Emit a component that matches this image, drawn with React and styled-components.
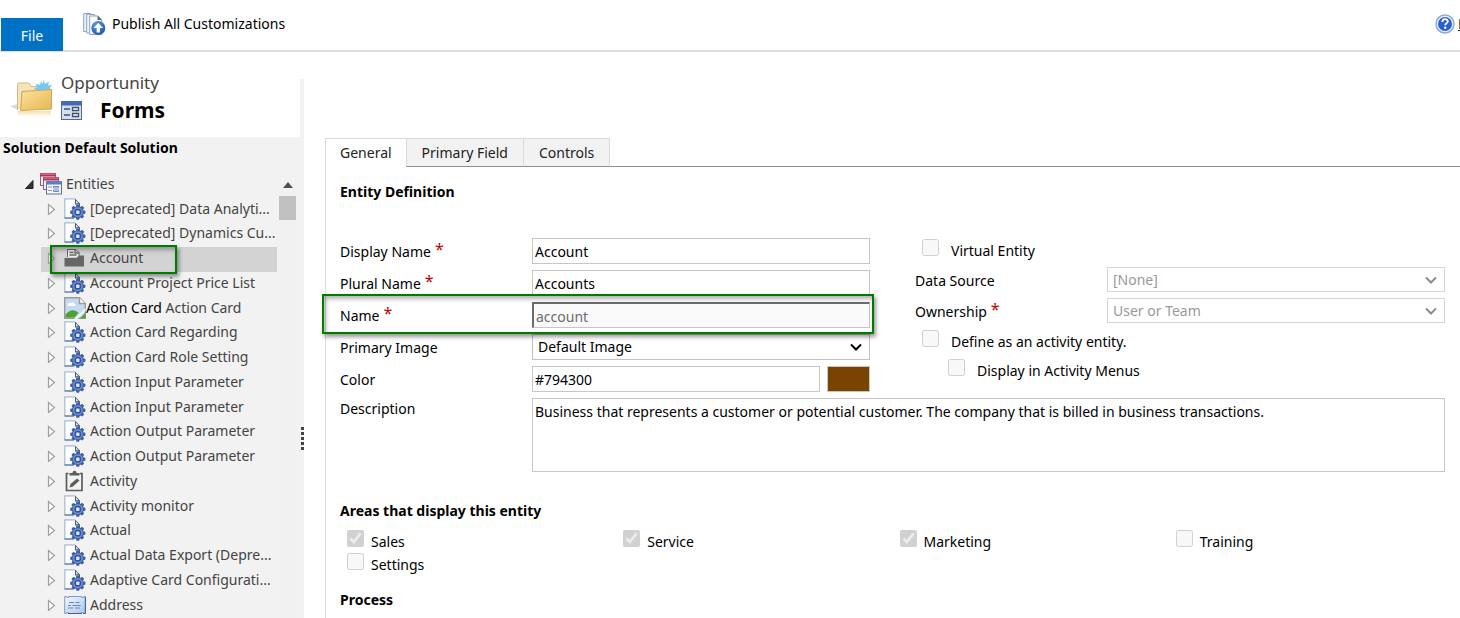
import React from 'react';
import styled, { createGlobalStyle } from 'styled-components';

const GlobalStyle = createGlobalStyle`
  * { box-sizing: border-box; }
  html, body { margin: 0; height: 100%; overflow: hidden; }
  body, button, input, select, textarea {
    font-family: "Segoe UI", "Noto Sans", "Open Sans", sans-serif;
    font-size: 14px;
    line-height: 20px;
    color: #000;
  }
  body { background: #fff; }
`;

const Shell = styled.div`
  display: flex;
  flex-direction: column;
  height: 100vh;
  overflow: hidden;
`;

const Ribbon = styled.header`
  display: flex;
  flex: none;
  height: 52px;
  padding-left: 1px;
  border-bottom: 2px solid #dedede;
`;

const FileButton = styled.button`
  align-self: flex-end;
  width: 62px;
  height: 33px;
  margin-bottom: -1px;
  padding: 2px 0 0;
  border: 0;
  background: #0072c6;
  color: #fff;
`;

const PublishButton = styled.button`
  display: flex;
  align-items: center;
  gap: 6px;
  height: 24px;
  margin: 12px 0 0 20px;
  padding: 0;
  border: 0;
  background: none;
  white-space: nowrap;
`;

const HelpArea = styled.div`
  display: flex;
  align-items: center;
  gap: 3px;
  width: 25px;
  height: 22px;
  margin: 13px 0 0 auto;
  overflow: hidden;
  white-space: nowrap;
  svg { flex: none; }
`;

const HelpLink = styled.a`
  color: #222;
`;

const Workspace = styled.div`
  display: flex;
  flex: 1;
  min-height: 0;
`;

const Sidebar = styled.aside`
  display: flex;
  flex-direction: column;
  flex: none;
  width: 300px;
  background: #f2f2f2;
`;

const Splitter = styled.div`
  display: flex;
  flex: none;
  flex-direction: column;
  align-items: flex-end;
  justify-content: center;
  width: 4px;
  margin-top: 27px;
  padding-top: 180px;
  background: #f2f2f2;
`;

const TitleBlock = styled.div`
  display: flex;
  align-items: flex-start;
  flex: none;
  height: 85px;
  padding: 20px 0 0 10px;
  background: #fff;
`;

const FolderSlot = styled.div`
  padding-top: 8px;
  margin-right: 8px;
`;

const EntityTitle = styled.div`
  font-size: 17px;
  line-height: 22px;
  color: #444;
`;

const FormsHeading = styled.h1`
  display: flex;
  align-items: center;
  gap: 18px;
  margin: 2px 0 0;
  font-size: 21px;
  line-height: 28px;
  font-weight: 700;
  svg { margin-top: 2px; }
`;

const SolutionName = styled.div`
  flex: none;
  height: 36px;
  padding: 1px 0 0 3px;
  font-weight: 700;
`;

const TreeArea = styled.div`
  display: flex;
  flex: 1;
  min-height: 0;
  overflow: hidden;
`;

const Tree = styled.ul`
  width: 277px;
  margin: 0;
  padding: 0;
  list-style: none;
`;

const TreeRow = styled.li`
  position: relative;
  display: flex;
  align-items: center;
  height: ${(p) => (p.$short ? 24 : 25)}px;
  margin-left: ${(p) => (p.$root ? 17 : 41)}px;
  padding: 0 0 3px 5px;
  background: ${(p) => (p.$selected ? '#d3d3d3' : 'transparent')};
  color: #444;
  svg { flex: none; }
`;

const RowLabel = styled.span`
  margin-left: ${(p) => p.$gap}px;
  white-space: nowrap;
  b { font-weight: 400; color: #000; }
`;

const ScrollTrack = styled.div`
  width: 17px;
  margin-left: 2px;
  background: #f1f1f1;
`;

const ScrollUp = styled.div`
  display: flex;
  align-items: center;
  justify-content: center;
  height: 23px;
`;

const ScrollThumb = styled.div`
  height: 24px;
  background: #c1c1c1;
`;

const Callout = styled.div`
  position: absolute;
  z-index: 2;
  top: ${(p) => p.$inset[0]}px;
  right: ${(p) => p.$inset[1]}px;
  bottom: ${(p) => p.$inset[2]}px;
  left: ${(p) => p.$inset[3]}px;
  border: 2px solid #007d00;
  box-shadow: 2px 3px 4px rgba(0, 0, 0, 0.4), inset 2px 3px 4px rgba(0, 0, 0, 0.3);
  pointer-events: none;
`;

const Main = styled.main`
  display: flex;
  flex: 1;
  flex-direction: column;
  min-width: 0;
  padding: 86px 0 0 21px;
`;

const TabBar = styled.div`
  display: flex;
  flex: none;
  height: 29px;
`;

const TabFill = styled.div`
  flex: 1;
  border-bottom: 1px solid #8a8d98;
`;

const Tab = styled.button`
  padding: 0 ${(p) => (p.$active ? 14 : 15)}px;
  border: 1px solid #dadada;
  border-left-width: ${(p) => (p.$active || p.$second ? 1 : 0)}px;
  border-right-width: ${(p) => (p.$active ? 0 : 1)}px;
  border-bottom: ${(p) => (p.$active ? '0' : '1px solid #8a8d98')};
  background: ${(p) => (p.$active ? '#fff' : '#f2f2f2')};
  color: #222;
`;

const Panel = styled.div`
  flex: 1;
  min-height: 0;
  padding: 15px 15px 0 14px;
  border-left: 1px solid #dadada;
`;

const SectionTitle = styled.h2`
  margin: 0;
  font-size: 14px;
  line-height: 20px;
  font-weight: 700;
`;

const FormColumns = styled.div`
  display: grid;
  grid-template-columns: 1fr 1fr;
  column-gap: 45px;
  margin-top: 36px;
`;

const FieldStack = styled.div`
  display: flex;
  flex-direction: column;
  gap: ${(p) => p.$gap}px;
`;

const Field = styled.div`
  position: relative;
  display: grid;
  grid-template-columns: 192px 1fr;
  align-items: center;
  label { padding-top: 1px; }
`;

const DescriptionField = styled(Field)`
  align-items: start;
  margin: 6px 0 29px;
`;

const Required = styled.span`
  margin-left: 4px;
  color: #c00000;
  font-size: 16px;
  line-height: 0;
  vertical-align: 2px;
`;

const TextInput = styled.input`
  width: 100%;
  min-width: 0;
  height: 26px;
  padding: 1px 2px 0;
  border: 1px solid #c6c6c6;
  border-radius: 0;
  background: #fff;
  &:disabled {
    border-width: 2px 1px 1px 2px;
    border-color: #6b6b6b #c6c6c6 #c6c6c6 #6b6b6b;
    background: #fafafa;
    color: #6b6b6b;
  }
`;

const SelectFrame = styled.div`
  display: grid;
  grid-template-columns: 1fr 20px;
  align-items: center;
  height: ${(p) => (p.$disabled ? 25 : 26)}px;
  margin-bottom: ${(p) => (p.$disabled ? 1 : 0)}px;
  color: ${(p) => (p.$disabled ? '#8c8c8c' : '#000')};
  select { grid-area: 1 / 1 / 2 / 3; }
  svg { grid-area: 1 / 2 / 2 / 3; pointer-events: none; }
`;

const Select = styled.select`
  appearance: none;
  width: 100%;
  height: 100%;
  padding: 0 20px 0 5px;
  border: 1px solid #c0c0c0;
  border-radius: 0;
  background: #fff;
  &:disabled { border-color: #d6d6d6; color: #999; opacity: 1; }
`;

const ColorPair = styled.div`
  display: grid;
  grid-template-columns: 1fr 43px;
  gap: 7px;
`;

const Swatch = styled.button`
  padding: 0;
  border: 1px solid #c6c6c6;
  background: #794300;
`;

const TextArea = styled.textarea`
  display: block;
  width: 100%;
  height: 74px;
  padding: 3px 2px;
  border: 1px solid #c6c6c6;
  border-radius: 0;
  resize: none;
`;

const Tick = styled.label`
  display: flex;
  align-items: flex-start;
  height: 24px;
  padding: 1px 0 0 ${(p) => (p.$nested ? 33 : 7)}px;
  input {
    flex: none;
    width: 17px;
    height: 17px;
    margin: 0 12px 0 0;
  }
  span { margin-top: 2px; }
`;

const AreaTick = styled(Tick)`
  height: 23px;
  padding-top: 0;
  input { margin-right: 7px; }
`;

const AreaGrid = styled.div`
  display: grid;
  grid-template-columns: repeat(4, 1fr);
  margin: 9px 0 14px;
`;

const GearPageIcon = () => (
  <svg width="22" height="22" viewBox="0 0 22 22">
    <path d="M1 .5h10.500l4.500 5v14.500H1z" fill="#fcfdff" />
    <path d="M.8 20V.8H11" fill="none" stroke="#a9bad4" strokeWidth="1.200" />
    <path d="M.5 20h9" stroke="#5878a8" strokeWidth="1.400" />
    <path d="M11 .5l5 5V9h-1.300V6.500H11z" fill="#48607c" />
    <path d="M12 2.500l2.500 2.700H12z" fill="#dfe8f4" />
    <g transform="translate(13.800 14.200)">
      <g fill="#3f5f9f">
        <circle r="6" />
        {[0, 45, 90, 135].map((a) => (
          <rect key={a} x="-1.700" y="-7.600" width="3.400" height="15.200" rx="1" transform={`rotate(${a})`} />
        ))}
      </g>
      <circle r="5" fill="#6f90d4" />
      <circle r="3.400" fill="#2f509c" />
      <rect x="-1.700" y="-1.700" width="3.400" height="3.400" rx=".6" fill="#dbe5fa" />
    </g>
  </svg>
);

const EntitiesIcon = () => (
  <svg width="22" height="22" viewBox="0 0 22 22">
    {[[0.5, 0.5], [3.5, 4.5]].map(([x, y]) => (
      <g key={x}>
        <rect x={x} y={y} width="15" height="12" fill="#f8eef2" stroke="#8d6280" />
        <rect x={x - 0.5} y={y - 0.5} width="16" height="3.500" fill="#b03355" />
        <path d={`M${x} ${y + 0.6}h15`} stroke="#d98aa0" />
      </g>
    ))}
    <rect x="6.500" y="8.500" width="15" height="12.500" fill="#f2f6fc" stroke="#58739c" />
    <rect x="6" y="8" width="16" height="3.500" fill="#5d7fc0" />
    <path d="M8 14h4M8 17.500h4" stroke="#8b9bb5" />
    <path d="M13.500 13.500h5v1.500h-5zM13.500 17h5v1.500h-5z" fill="#fff" stroke="#7288ac" />
  </svg>
);

const AccountIcon = () => (
  <svg width="22" height="22" viewBox="0 0 22 22">
    <path d="M3.500 10V2.500h8l3.500 3V10" fill="#e8e8e8" stroke="#6a6a6a" />
    <path d="M11 2v4h4.500M5.500 5.500h4M5.500 8h7" fill="none" stroke="#6a6a6a" strokeWidth="1.300" />
    <path d="M.5 11h12l2.500-2.500h5V19.500H.5z" fill="#666" />
  </svg>
);

const BrokenImageIcon = () => (
  <svg width="22" height="22" viewBox="0 0 22 22">
    <path d="M.7.7h14.800l5.800 5.800v14.800H.7z" fill="#c6d9f3" stroke="#9a9a9a" strokeWidth="1.400" />
    <path d="M15.500.7v5.800h5.800" fill="#fff" stroke="#9a9a9a" strokeWidth="1.400" />
    <path d="M3.500 8c0-2 2-2.500 3-1.500 1-2 4-1.500 4 .5 1.500 0 1.500 2 0 2h-6c-.6 0-1-.4-1-1z" fill="#fff" />
    <path d="M1.500 20.500v-3c4-5 9-6 13-1.500l-4 4.500z" fill="#4aa32b" />
    <path d="M10 22L21.500 11v3L13.500 22z" fill="#f2f2f2" />
    <path d="M16 21.300h5.300V16z" fill="#4aa32b" />
  </svg>
);

const ActivityIcon = () => (
  <svg width="22" height="22" viewBox="0 0 22 22">
    <path d="M4.500 3.500H2.500v17h15.500v-17h-2" fill="none" stroke="#5c5c5c" strokeWidth="1.700" />
    <path d="M5.500 5.500V3h3c0-3 4-3 4 0h3v2.500z" fill="#5c5c5c" />
    <path d="M5.500 17.500l1-3.500 6.500-5.500 2.500 2-6.500 6z" fill="#5c5c5c" />
  </svg>
);

const AddressIcon = () => (
  <svg width="22" height="22" viewBox="0 0 22 22">
    <defs>
      <linearGradient id="addressCard" x1="0" y1="0" x2="1" y2="1">
        <stop offset="0" stopColor="#f4f9ff" />
        <stop offset="1" stopColor="#a9c6ea" />
      </linearGradient>
    </defs>
    <path d="M.7 2.500h2v1h2v-1h13v1h2v-1h1.800v17h-2v-1h-2v1h-13v-1h-2v1H.7z" fill="url(#addressCard)" stroke="#7f9cc8" />
    <path d="M21.300 3v16.500h-2M4 19.500h14" fill="none" stroke="#3d609d" />
    <path d="M5 8.500h5M11.500 8.500h4M4 11.500h3M8.500 11.500h8M4 14h5M11 14h5" stroke="#6a86b3" />
  </svg>
);

const PublishIcon = () => (
  <svg width="23" height="24" viewBox="0 0 23 24">
    <defs>
      <radialGradient id="publishBall" cx=".4" cy=".3" r=".8">
        <stop offset="0" stopColor="#5fa0e6" />
        <stop offset="1" stopColor="#1c4f9c" />
      </radialGradient>
    </defs>
    <path d="M.7 1.500h7V19.500h-7z" fill="#e9f0fa" stroke="#8ea6c8" />
    <path d="M3.700 2.500h8V21h-8z" fill="#eef4fc" stroke="#8ea6c8" />
    <path d="M6.700 4h8.500l3.500 4v14.500h-12z" fill="#fbfdff" stroke="#8ea6c8" />
    <path d="M14.500 3.500v4.500h4.500z" fill="#4f6884" />
    <circle cx="15.300" cy="16" r="7" fill="url(#publishBall)" />
    <path d="M15.300 11l4.800 5h-3.200v4.500h-3.200V16h-3.200z" fill="#fff" />
  </svg>
);

const HelpIcon = () => (
  <svg width="20" height="20" viewBox="0 0 20 20">
    <circle cx="10" cy="10" r="9" fill="#f0f5fc" stroke="#8fabd0" strokeWidth="1.500" />
    <circle cx="10" cy="10" r="7" fill="#2860d2" />
    <path d="M7.300 8c0-4 5.500-3.500 5.500-.7 0 2-2.600 1.900-2.600 4" fill="none" stroke="#fff" strokeWidth="1.800" />
    <circle cx="10.200" cy="13.800" r="1.200" fill="#fff" />
  </svg>
);

const FolderIcon = () => (
  <svg width="43" height="38" viewBox="0 0 43 38">
    <defs>
      <linearGradient id="folderFront" x1="0" y1="0" x2="1" y2="1">
        <stop offset="0" stopColor="#fbe2a0" />
        <stop offset="1" stopColor="#e8b551" />
      </linearGradient>
      <linearGradient id="folderFade" x1="0" y1="0" x2="0" y2="1">
        <stop offset="0" stopColor="#f2d08a" stopOpacity=".7" />
        <stop offset="1" stopColor="#f2d08a" stopOpacity="0" />
      </linearGradient>
    </defs>
    <path d="M0 26l8-2v6z" fill="#dcdcdc" />
    <path d="M8 31h33v6H8z" fill="url(#folderFade)" />
    <path d="M7.500 30V4.500c0-1 .5-1.500 1.500-1.500h9c1 0 1.500.5 2 1.500l1 2h18v10" fill="#f5e3bb" stroke="#cdb98c" />
    <path d="M33.500 0l1.500 4 4-2.500-1 4 4-.5-2.500 3L42 10H26l-2-2 3.500-.7-2-3.800 4.500 1.500L31 1l1.500 3z" fill="#74c8f8" />
    <path d="M12 11.500L41.500 9.500V29L10.500 30.500z" fill="url(#folderFront)" stroke="#d2a550" />
  </svg>
);

const FormIcon = () => (
  <svg width="21" height="20" viewBox="0 0 21 20">
    <rect x=".5" y=".5" width="20" height="18" fill="#d3dff2" stroke="#51698f" />
    <rect x="0" y="0" width="21" height="4.500" fill="#4569b4" />
    <path d="M3 8h6M3 14h6" stroke="#444f63" strokeWidth="1.300" />
    <path d="M11.500 6.500h6v3h-6zM11.500 12.500h6v3h-6z" fill="#fff" stroke="#444f63" strokeWidth="1.300" />
  </svg>
);

const ChevronIcon = () => (
  <svg width="12" height="8" viewBox="0 0 12 8">
    <path d="M1 1.500l5 5 5-5" fill="none" stroke="currentColor" strokeWidth="2" />
  </svg>
);

const Expander = ({ open }) =>
  open ? (
    <svg width="18" height="12" viewBox="0 0 18 12">
      <path d="M3.500 10.500H11V2.500z" fill="#333" stroke="#222" />
    </svg>
  ) : (
    <svg width="18" height="12" viewBox="0 0 18 12">
      <path d="M2.500 1.500v10l6-5z" fill="#fafafa" stroke="#a0a0a0" strokeWidth="1.200" />
    </svg>
  );

const icons = {
  gear: GearPageIcon,
  account: AccountIcon,
  broken: BrokenImageIcon,
  activity: ActivityIcon,
  address: AddressIcon,
};

const entities = [
  ['[Deprecated] Data Analyti...', 'gear'],
  ['[Deprecated] Dynamics Cu...', 'gear'],
  ['Account', 'account'],
  ['Account Project Price List', 'gear'],
  ['Action Card', 'broken'],
  ['Action Card Regarding', 'gear'],
  ['Action Card Role Setting', 'gear'],
  ['Action Input Parameter', 'gear'],
  ['Action Input Parameter', 'gear'],
  ['Action Output Parameter', 'gear'],
  ['Action Output Parameter', 'gear'],
  ['Activity', 'activity'],
  ['Activity monitor', 'gear'],
  ['Actual', 'gear'],
  ['Actual Data Export (Depre...', 'gear'],
  ['Adaptive Card Configurati...', 'gear'],
  ['Address', 'address'],
];

const areas = [
  ['Sales', true],
  ['Service', true],
  ['Marketing', true],
  ['Training', false],
  ['Settings', false],
];

const EntityTree = () => (
  <TreeArea>
    <Tree>
      <TreeRow $root>
        <Expander open />
        <EntitiesIcon />
        <RowLabel $gap={4}>Entities</RowLabel>
      </TreeRow>
      {entities.map(([name, icon], i) => {
        const Icon = icons[icon];
        return (
          <TreeRow key={i} $short={i % 4 === 0} $selected={icon === 'account'}>
            <Expander />
            <Icon />
            <RowLabel $gap={icon === 'broken' ? 0 : 4}>
              {icon === 'broken' && <b>Action Card </b>}
              {name}
            </RowLabel>
            {icon === 'account' && <Callout $inset={[-2, 100, -2, 9]} />}
          </TreeRow>
        );
      })}
    </Tree>
    <ScrollTrack>
      <ScrollUp>
        <svg width="10" height="6" viewBox="0 0 10 6"><path d="M0 6L5 0l5 6z" fill="#505050" /></svg>
      </ScrollUp>
      <ScrollThumb />
    </ScrollTrack>
  </TreeArea>
);

const CheckField = ({ children, ...rest }) => (
  <Tick {...rest}>
    <input type="checkbox" disabled />
    <span>{children}</span>
  </Tick>
);

const SelectField = ({ id, label, required, value, disabled }) => (
  <Field>
    <label htmlFor={id}>{label}{required && <Required>*</Required>}</label>
    <SelectFrame $disabled={disabled}>
      <Select id={id} disabled={disabled}><option>{value}</option></Select>
      <ChevronIcon />
    </SelectFrame>
  </Field>
);

export default function App() {
  return (
    <Shell>
      <GlobalStyle />
      <Ribbon>
        <FileButton>File</FileButton>
        <PublishButton><PublishIcon />Publish All Customizations</PublishButton>
        <HelpArea><HelpIcon /><HelpLink href="#help">Help</HelpLink></HelpArea>
      </Ribbon>
      <Workspace>
        <Sidebar>
          <TitleBlock>
            <FolderSlot><FolderIcon /></FolderSlot>
            <div>
              <EntityTitle>Opportunity</EntityTitle>
              <FormsHeading><FormIcon />Forms</FormsHeading>
            </div>
          </TitleBlock>
          <SolutionName>Solution Default Solution</SolutionName>
          <EntityTree />
        </Sidebar>
        <Splitter>
          <svg width="3" height="26" viewBox="0 0 3 26">
            {[0, 5, 10, 15, 20].map((y) => <rect key={y} y={y + 1} width="3" height="3" fill="#444" />)}
          </svg>
        </Splitter>
        <Main>
          <TabBar>
            <Tab $active>General</Tab>
            <Tab $second>Primary Field</Tab>
            <Tab>Controls</Tab>
            <TabFill />
          </TabBar>
          <Panel>
            <SectionTitle>Entity Definition</SectionTitle>
            <FormColumns>
              <FieldStack $gap={6}>
                <Field>
                  <label htmlFor="displayName">Display Name<Required>*</Required></label>
                  <TextInput id="displayName" defaultValue="Account" />
                </Field>
                <Field>
                  <label htmlFor="pluralName">Plural Name<Required>*</Required></label>
                  <TextInput id="pluralName" defaultValue="Accounts" />
                </Field>
                <Field>
                  <label htmlFor="name">Name<Required>*</Required></label>
                  <TextInput id="name" defaultValue="account" disabled />
                  <Callout $inset={[-8, -4, -6, -18]} />
                </Field>
                <SelectField id="image" label="Primary Image" value="Default Image" />
                <Field>
                  <label htmlFor="color">Color</label>
                  <ColorPair>
                    <TextInput id="color" defaultValue="#794300" />
                    <Swatch aria-label="Pick color" />
                  </ColorPair>
                </Field>
              </FieldStack>
              <FieldStack $gap={5}>
                <CheckField>Virtual Entity</CheckField>
                <SelectField id="source" label="Data Source" value="[None]" disabled />
                <SelectField id="owner" label="Ownership" value="User or Team" required disabled />
                <CheckField>Define as an activity entity.</CheckField>
                <CheckField $nested>Display in Activity Menus</CheckField>
              </FieldStack>
            </FormColumns>
            <DescriptionField>
              <label htmlFor="description">Description</label>
              <TextArea
                id="description"
                defaultValue="Business that represents a customer or potential customer. The company that is billed in business transactions."
              />
            </DescriptionField>
            <SectionTitle>Areas that display this entity</SectionTitle>
            <AreaGrid>
              {areas.map(([name, checked]) => (
                <AreaTick key={name}>
                  <input type="checkbox" defaultChecked={checked} disabled />
                  <span>{name}</span>
                </AreaTick>
              ))}
            </AreaGrid>
            <SectionTitle>Process</SectionTitle>
          </Panel>
        </Main>
      </Workspace>
    </Shell>
  );
}
